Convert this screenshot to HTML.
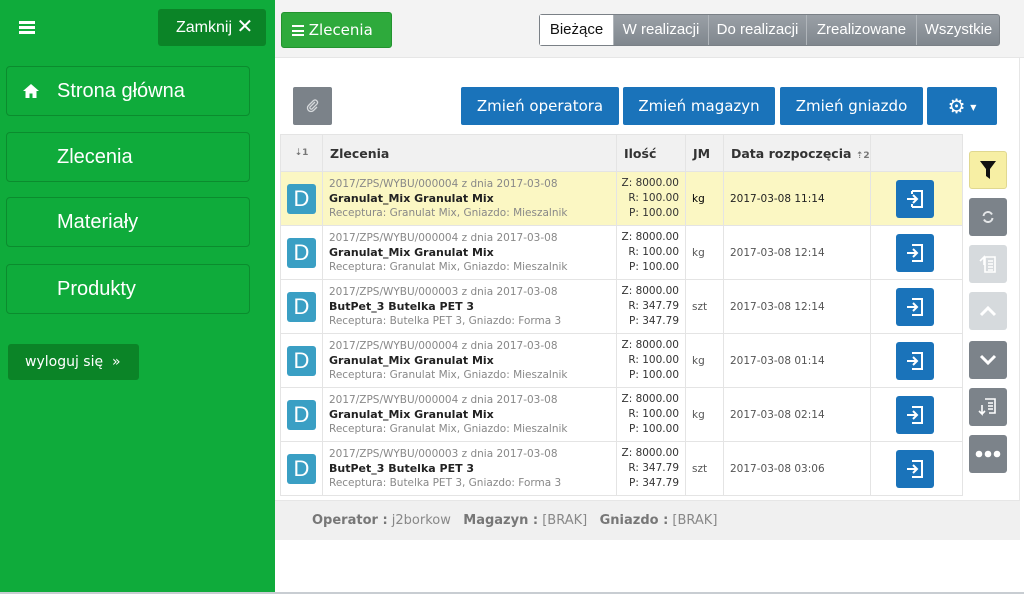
<!DOCTYPE html>
<html><head><meta charset="utf-8"><style>
*{box-sizing:border-box;margin:0;padding:0}
body{width:1024px;height:594px;overflow:hidden;background:#fff;position:relative;font-family:"DejaVu Sans",Verdana,sans-serif}
.a{position:absolute}
#side{left:0;top:0;width:275px;height:594px;background:#0fab3b}
.mi{position:absolute;left:6px;width:244px;height:50px;border:1px solid #0b8c2e;border-radius:4px;color:#fff;font:20px "Liberation Sans",Arial,sans-serif;line-height:48px;padding-left:50px}
.dk{background:#0b8427;border-radius:3px;color:#fff}
#hdr{left:275px;top:0;width:749px;height:58px;background:#f3f3f3;border-bottom:1px solid #e6e6e6}
.tab{position:absolute;top:0;height:30px;font:15px "Liberation Sans",Arial,sans-serif;line-height:30px;color:#fff;text-align:center;border-left:1px solid #b0b5ba}
.bb{position:absolute;top:87px;height:38px;background:#1a73ba;border-radius:2px;color:#fff;font-size:15px;line-height:38px;text-align:center}
table{position:absolute;left:280px;top:134px;width:683px;border-collapse:collapse;border:1px solid #ddd}
td,th{border:1px solid #e4e4e4;font-size:10.5px;vertical-align:middle}
th{height:37px;background:#f1f1f1;text-align:left;padding-left:7px;color:#333;font-size:12.5px}
td{height:54px}
tr.y td{background:#fbf7c3}
.D{width:29px;height:30px;background:#3a9fc4;border-radius:3px;color:#fff;font:22px "Liberation Sans",Arial,sans-serif;line-height:30px;text-align:center;margin-left:6px}
.l1{color:#888;font-size:10.5px}
.l2{color:#222;font-weight:bold;font-size:11px;margin:2px 0}
.l3{color:#888;font-size:10.5px}
.q{text-align:right;padding-right:6px;color:#333;line-height:15px}
.go{width:38px;height:38px;background:#1a73ba;border-radius:3px;margin-left:25px;display:flex;align-items:center;justify-content:center}
.rb{position:absolute;left:969px;width:38px;height:38px;border-radius:3px;background:#7c838a;display:flex;align-items:center;justify-content:center}
.lt{background:#d6dadd}
</style></head><body>
<div id="side" class="a">
 <div class="a" style="left:19px;top:21px;width:16px;height:13px;border-top:3px solid #fff;border-bottom:3px solid #fff"><div style="margin-top:2px;height:3px;background:#fff"></div></div>
 <div class="a dk" style="left:158px;top:9px;width:108px;height:37px;font:16px 'Liberation Sans',Arial,sans-serif;line-height:37px;padding-left:18px">Zamknij <span style="font-size:20px;vertical-align:-1px">✕</span></div>
 <div class="mi" style="top:66px"><svg class="a" style="left:15px;top:16px" width="18" height="16" viewBox="0 0 18 16"><path d="M9 1L1 8h2.5v7h4v-4.5h3V15h4V8H17z" fill="#fff"/></svg>Strona główna</div>
 <div class="mi" style="top:132px">Zlecenia</div>
 <div class="mi" style="top:197px">Materiały</div>
 <div class="mi" style="top:264px">Produkty</div>
 <div class="a dk" style="left:8px;top:344px;width:131px;height:36px;font-size:14px;line-height:36px;padding-left:17px">wyloguj się &nbsp;»</div>
</div>
<div id="hdr" class="a">
 <div class="a" style="left:6px;top:12px;width:111px;height:36px;background:#2eaa3c;border:1px solid #23932f;border-radius:3px;color:#fff;font-size:15px;line-height:34px;padding-left:10px"><span style="display:inline-block;width:12px;height:11px;border-top:2px solid #fff;border-bottom:2px solid #fff;vertical-align:-1px;position:relative"><span style="position:absolute;top:2.5px;left:0;width:12px;height:2px;background:#fff"></span></span> Zlecenia</div>
 <div class="a" style="left:264px;top:14px;width:461px;height:32px;background:linear-gradient(#9aa0a6,#80878e);border:1px solid #7a8086;border-radius:3px">
  <div class="tab" style="left:0;width:73px;background:#fff;color:#111;border:none">Bieżące</div>
  <div class="tab" style="left:73px;width:95px">W realizacji</div>
  <div class="tab" style="left:168px;width:98px">Do realizacji</div>
  <div class="tab" style="left:266px;width:110px">Zrealizowane</div>
  <div class="tab" style="left:376px;width:84px">Wszystkie</div>
 </div>
</div>
<div class="a" style="left:293px;top:87px;width:39px;height:38px;background:#7b8289;border-radius:2px;display:flex;align-items:center;justify-content:center"><svg width="14" height="14" viewBox="0 0 14 14"><path d="M9 3L4 8a1.5 1.5 0 0 0 2 2l5-5a2.5 2.5 0 0 0-3.5-3.5L2.5 6.5a3.5 3.5 0 0 0 5 5L11 8" fill="none" stroke="#d6d9dc" stroke-width="1.3"/></svg></div>
<div class="bb" style="left:461px;width:158px">Zmień operatora</div>
<div class="bb" style="left:623px;width:152px">Zmień magazyn</div>
<div class="bb" style="left:780px;width:143px">Zmień gniazdo</div>
<div class="bb" style="left:927px;width:70px"><span style="font-size:20px">⚙</span> <span style="font-size:8px;vertical-align:3px">▼</span></div>
<table>
<tr><th style="width:42px;font-size:9px;color:#777;text-align:center;padding:0">⇣1</th><th style="width:294px">Zlecenia</th><th style="width:69px">Ilość</th><th style="width:38px">JM</th><th style="width:147px">Data rozpoczęcia <span style="font-size:9px;color:#777">⇡2</span></th><th></th></tr>
<tr class="y"><td><div class="D">D</div></td><td style="padding-left:6px"><div class="l1">2017/ZPS/WYBU/000004 z dnia 2017-03-08</div><div class="l2">Granulat_Mix Granulat Mix</div><div class="l3">Receptura: Granulat Mix, Gniazdo: Mieszalnik</div></td><td class="q">Z: 8000.00<br>R: 100.00<br>P: 100.00</td><td style="padding-left:6px">kg</td><td style="padding-left:6px;color:#222">2017-03-08 11:14</td><td><div class="go"><svg width="20" height="20" viewBox="0 0 20 20"><path d="M7 2h10v16H7M7 5V2M7 15v3M2 10h9M8 6l4 4-4 4" fill="none" stroke="#fff" stroke-width="2"/></svg></div></td></tr>
<tr><td><div class="D">D</div></td><td style="padding-left:6px"><div class="l1">2017/ZPS/WYBU/000004 z dnia 2017-03-08</div><div class="l2">Granulat_Mix Granulat Mix</div><div class="l3">Receptura: Granulat Mix, Gniazdo: Mieszalnik</div></td><td class="q">Z: 8000.00<br>R: 100.00<br>P: 100.00</td><td style="padding-left:6px;color:#555">kg</td><td style="padding-left:6px;color:#555">2017-03-08 12:14</td><td><div class="go"><svg width="20" height="20" viewBox="0 0 20 20"><path d="M7 2h10v16H7M2 10h9M8 6l4 4-4 4" fill="none" stroke="#fff" stroke-width="2"/></svg></div></td></tr>
<tr><td><div class="D">D</div></td><td style="padding-left:6px"><div class="l1">2017/ZPS/WYBU/000003 z dnia 2017-03-08</div><div class="l2">ButPet_3 Butelka PET 3</div><div class="l3">Receptura: Butelka PET 3, Gniazdo: Forma 3</div></td><td class="q">Z: 8000.00<br>R: 347.79<br>P: 347.79</td><td style="padding-left:6px;color:#555">szt</td><td style="padding-left:6px;color:#555">2017-03-08 12:14</td><td><div class="go"><svg width="20" height="20" viewBox="0 0 20 20"><path d="M7 2h10v16H7M2 10h9M8 6l4 4-4 4" fill="none" stroke="#fff" stroke-width="2"/></svg></div></td></tr>
<tr><td><div class="D">D</div></td><td style="padding-left:6px"><div class="l1">2017/ZPS/WYBU/000004 z dnia 2017-03-08</div><div class="l2">Granulat_Mix Granulat Mix</div><div class="l3">Receptura: Granulat Mix, Gniazdo: Mieszalnik</div></td><td class="q">Z: 8000.00<br>R: 100.00<br>P: 100.00</td><td style="padding-left:6px;color:#555">kg</td><td style="padding-left:6px;color:#555">2017-03-08 01:14</td><td><div class="go"><svg width="20" height="20" viewBox="0 0 20 20"><path d="M7 2h10v16H7M2 10h9M8 6l4 4-4 4" fill="none" stroke="#fff" stroke-width="2"/></svg></div></td></tr>
<tr><td><div class="D">D</div></td><td style="padding-left:6px"><div class="l1">2017/ZPS/WYBU/000004 z dnia 2017-03-08</div><div class="l2">Granulat_Mix Granulat Mix</div><div class="l3">Receptura: Granulat Mix, Gniazdo: Mieszalnik</div></td><td class="q">Z: 8000.00<br>R: 100.00<br>P: 100.00</td><td style="padding-left:6px;color:#555">kg</td><td style="padding-left:6px;color:#555">2017-03-08 02:14</td><td><div class="go"><svg width="20" height="20" viewBox="0 0 20 20"><path d="M7 2h10v16H7M2 10h9M8 6l4 4-4 4" fill="none" stroke="#fff" stroke-width="2"/></svg></div></td></tr>
<tr><td><div class="D">D</div></td><td style="padding-left:6px"><div class="l1">2017/ZPS/WYBU/000003 z dnia 2017-03-08</div><div class="l2">ButPet_3 Butelka PET 3</div><div class="l3">Receptura: Butelka PET 3, Gniazdo: Forma 3</div></td><td class="q">Z: 8000.00<br>R: 347.79<br>P: 347.79</td><td style="padding-left:6px;color:#555">szt</td><td style="padding-left:6px;color:#555">2017-03-08 03:06</td><td><div class="go"><svg width="20" height="20" viewBox="0 0 20 20"><path d="M7 2h10v16H7M2 10h9M8 6l4 4-4 4" fill="none" stroke="#fff" stroke-width="2"/></svg></div></td></tr>
</table>
<div class="rb" style="top:151px;background:#f7efa4;border:1px solid #e0d890"><svg width="18" height="20" viewBox="0 0 18 20"><path d="M1 1h16l-6 8v10l-4-3V9z" fill="#111"/></svg></div>
<div class="rb" style="top:198px"><svg width="14" height="14" viewBox="0 0 14 14"><path d="M2.5 6a4.5 4.5 0 0 1 8.5-1.5M11.5 8a4.5 4.5 0 0 1-8.5 1.5" fill="none" stroke="#e5e7e9" stroke-width="2"/></svg></div>
<div class="rb lt" style="top:245px"><svg width="20" height="20" viewBox="0 0 20 20"><path d="M7 3h10v15H7zM10 7h5M10 10h5M10 13h5M10 16h5M2 7l4-4 0 8" fill="none" stroke="#fff" stroke-width="1.6"/></svg></div>
<div class="rb lt" style="top:292px"><svg width="18" height="12" viewBox="0 0 18 12"><path d="M2 10l7-7 7 7" fill="none" stroke="#fff" stroke-width="3"/></svg></div>
<div class="rb" style="top:341px"><svg width="18" height="12" viewBox="0 0 18 12"><path d="M2 2l7 7 7-7" fill="none" stroke="#fff" stroke-width="3"/></svg></div>
<div class="rb" style="top:388px"><svg width="20" height="20" viewBox="0 0 20 20"><path d="M7 2h10v14H11M10 6h5M10 9h5M10 12h5M4 8v9l-3-3M4 17l3-3" fill="none" stroke="#fff" stroke-width="1.6"/></svg></div>
<div class="rb" style="top:435px"><svg width="26" height="8" viewBox="0 0 26 8"><circle cx="4" cy="4" r="3.3" fill="#fff"/><circle cx="13" cy="4" r="3.3" fill="#fff"/><circle cx="22" cy="4" r="3.3" fill="#fff"/></svg></div>
<div class="a" style="left:1019px;top:58px;width:1px;height:442px;background:#e6e6e6"></div>
<div class="a" style="left:275px;top:500px;width:745px;height:40px;background:#f0f0f0;border-top:1px solid #e6e6e6;font-size:13px;color:#888;line-height:40px;padding-left:37px"><b style="color:#777">Operator :</b> j2borkow &nbsp; <b style="color:#777">Magazyn :</b> [BRAK] &nbsp; <b style="color:#777">Gniazdo :</b> [BRAK]</div>
<div class="a" style="left:0;top:592px;width:1024px;height:2px;background:#c8cdd2"></div>
</body></html>
